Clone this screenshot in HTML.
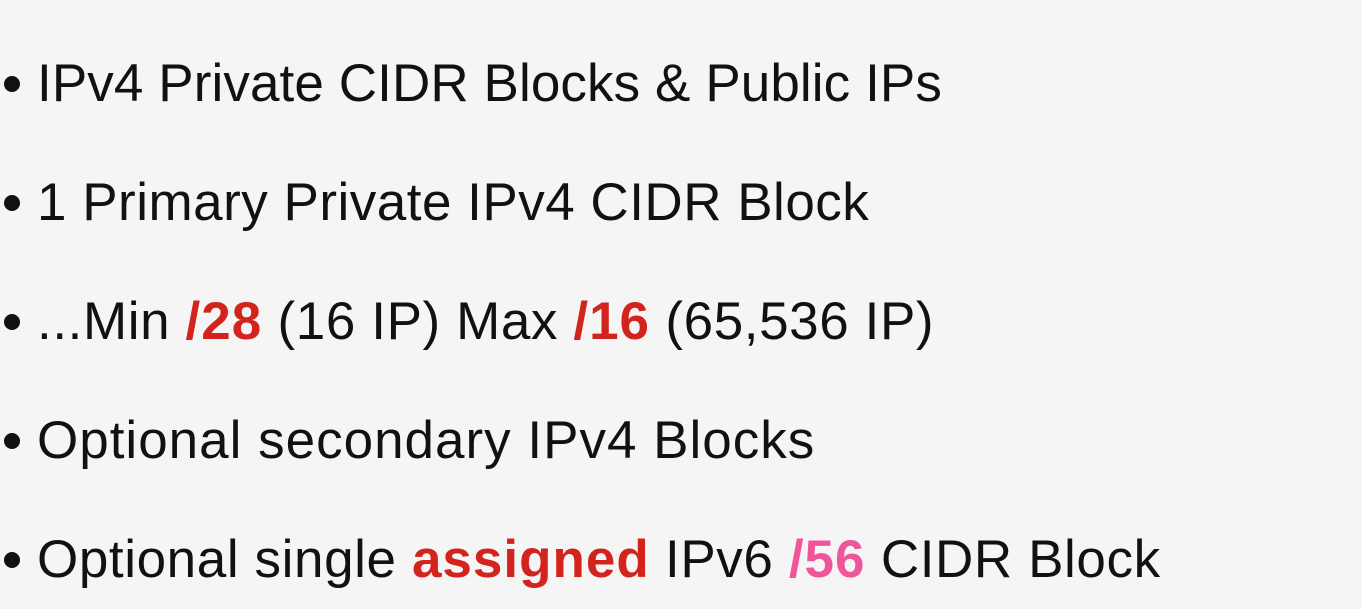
<!DOCTYPE html>
<html><head><meta charset="utf-8"><style>
html,body{margin:0;padding:0;}
body{width:1362px;height:609px;background:#f5f5f5;position:relative;overflow:hidden;font-family:"Liberation Sans","DejaVu Sans",sans-serif;color:#111;}
.l{position:absolute;left:37px;font-size:53px;line-height:1;white-space:nowrap;letter-spacing:0.5px;}
.l::before{content:"";position:absolute;left:-33px;top:19px;width:16px;height:16px;border-radius:50%;background:#111;}
.r{color:#d2231c;font-weight:bold;letter-spacing:1px;}
.p{color:#f0559b;font-weight:bold;letter-spacing:1px;}
</style></head><body>
<div class="l" style="top:57px;letter-spacing:0.1px">IPv4 Private CIDR Blocks &amp; Public IPs</div>
<div class="l" style="top:176px;letter-spacing:0.5px">1 Primary Private IPv4 CIDR Block</div>
<div class="l" style="top:295px;letter-spacing:0.6px">...Min <span class="r">/28</span> (16 IP) Max <span class="r">/16</span> (65,536 IP)</div>
<div class="l" style="top:414px;letter-spacing:1px">Optional secondary IPv4 Blocks</div>
<div class="l" style="top:533px;letter-spacing:0.6px">Optional single <span class="r">assigned</span> IPv6 <span class="p">/56</span> CIDR Block</div>
</body></html>
